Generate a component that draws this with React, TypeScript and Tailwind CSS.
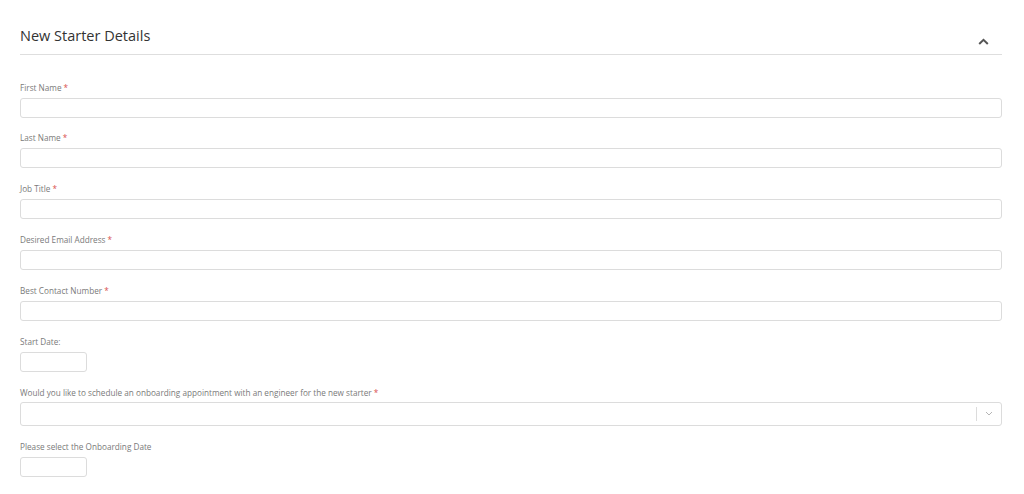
import React from "react";

const font = { fontFamily: '"Open Sans", "Noto Sans", sans-serif' };

function Label({ text, req }: { text: string; req?: boolean }) {
  return (
    <div className="text-[8.2px] leading-[11px] text-[#7a7a7a] h-[11px]">
      {text}
      {req && <span className="text-[#d9534f]"> *</span>}
    </div>
  );
}

function Field({ text, req, small }: { text: string; req?: boolean; small?: boolean }) {
  return (
    <div className="flex flex-col">
      <Label text={text} req={req} />
      <input
        className={
          "mt-[5px] h-[20px] rounded-[3px] border border-[#dcdcdc] bg-white outline-none " +
          (small ? "w-[67px]" : "w-full")
        }
      />
    </div>
  );
}

export default function App() {
  return (
    <div className="w-[1024px] h-[494px] bg-white pl-[20px] pr-[22px] pt-[25px] overflow-hidden" style={font}>
      <div className="flex items-end justify-between border-b border-[#dedede] h-[30px]">
        <div className="text-[14.5px] leading-[22px] text-[#333] pb-[6px] self-start">New Starter Details</div>
        <div className="pr-[13px] pb-[9px]">
          <svg width="11" height="7" viewBox="0 0 11 7">
            <path d="M1.2 6 L5.5 1.8 L9.8 6" fill="none" stroke="#555" strokeWidth="2" />
          </svg>
        </div>
      </div>
      <div className="flex flex-col gap-[14.9px] pt-[26.6px]">
        <Field text="First Name" req />
        <Field text="Last Name" req />
        <Field text="Job Title" req />
        <Field text="Desired Email Address" req />
        <Field text="Best Contact Number" req />
        <Field text="Start Date:" small />
        <div className="flex flex-col">
          <Label text="Would you like to schedule an onboarding appointment with an engineer for the new starter" req />
          <div className="mt-[4px] h-[24px] rounded-[3px] border border-[#dcdcdc] bg-white flex items-center justify-end">
            <div className="w-px h-[14px] bg-[#dcdcdc]" />
            <div className="w-[24px] flex justify-center">
              <svg width="8" height="5" viewBox="0 0 8 5">
                <path d="M1 1 L4 4 L7 1" fill="none" stroke="#b5b5b5" strokeWidth="1" />
              </svg>
            </div>
          </div>
        </div>
        <Field text="Please select the Onboarding Date" small />
      </div>
    </div>
  );
}
